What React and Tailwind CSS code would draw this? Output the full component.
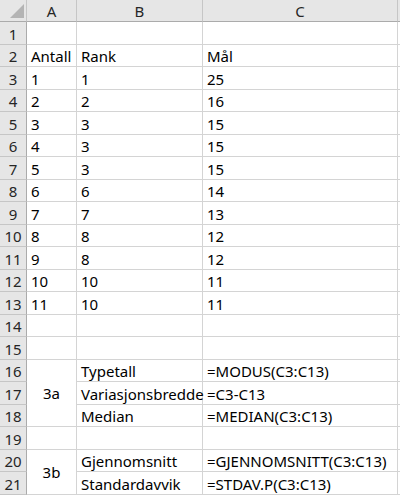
import React from "react";

const rows = [
  ["", "", ""],
  ["Antall", "Rank", "Mål"],
  ["1", "1", "25"],
  ["2", "2", "16"],
  ["3", "3", "15"],
  ["4", "3", "15"],
  ["5", "3", "15"],
  ["6", "6", "14"],
  ["7", "7", "13"],
  ["8", "8", "12"],
  ["9", "8", "12"],
  ["10", "10", "11"],
  ["11", "10", "11"],
  ["", "", ""],
  ["", "", ""],
  [null, "Typetall", "=MODUS(C3:C13)"],
  [null, "Variasjonsbredde", "=C3-C13"],
  [null, "Median", "=MEDIAN(C3:C13)"],
  ["", "", ""],
  [null, "Gjennomsnitt", "=GJENNOMSNITT(C3:C13)"],
  [null, "Standardavvik", "=STDAV.P(C3:C13)"],
];

const cell = "border-r border-b border-[#d4d4d4] pl-[4px] flex items-end pb-[1px] whitespace-nowrap overflow-visible";
const rowHead = "bg-[#e6e6e6] border-r border-b border-r-[#ababab] border-b-[#c6c6c6] flex items-end justify-center pb-[1px] text-[#262626]";

export default function App() {
  return (
    <div className="w-[400px] h-[498px] bg-white overflow-hidden text-[15px] leading-[18px] text-black" style={{ fontFamily: "'Noto Sans', 'Open Sans', sans-serif" }}>
      <div className="grid grid-cols-[27px_50px_126px_195px_2px] grid-rows-[22px_repeat(21,22.5px)]">
        {/* header row */}
        <div className="bg-[#e6e6e6] border-r border-b border-r-[#c6c6c6] border-b-[#ababab] relative">
          <svg width="14" height="14" className="absolute left-[10px] top-[4px]">
            <polygon points="14,0 14,14 0,14" fill="#b4b4b4" />
          </svg>
        </div>
        {["A", "B", "C"].map((c) => (
          <div key={c} className="bg-[#e6e6e6] border-r border-b border-r-[#c6c6c6] border-b-[#ababab] flex items-center justify-center text-[#262626]">{c}</div>
        ))}
        <div className="bg-[#e6e6e6] border-b border-b-[#ababab]" />

        {rows.map((r, i) => {
          const n = i + 1;
          return (
            <React.Fragment key={n}>
              <div className={rowHead}>{n}</div>
              {n === 16 && <div className={`${cell} row-span-3 !items-center justify-center !pl-0 !pb-0`}>3a</div>}
              {n === 20 && <div className={`${cell} row-span-2 !items-center justify-center !pl-0 !pb-0`}>3b</div>}
              {r[0] !== null && <div className={cell}>{r[0]}</div>}
              <div className={cell}>{r[1]}</div>
              <div className={cell}>{r[2]}</div>
              <div className="border-b border-[#d4d4d4]" />
            </React.Fragment>
          );
        })}
      </div>
    </div>
  );
}
